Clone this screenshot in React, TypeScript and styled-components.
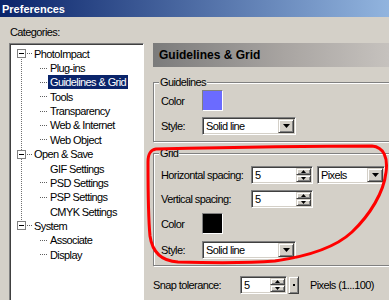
import { createGlobalStyle, styled } from 'styled-components'

const GlobalStyle = createGlobalStyle`
  html, body { margin: 0; padding: 0; background: #d4d0c8; overflow: hidden; }
  body {
    font-family: "Liberation Sans", Arial, sans-serif;
    font-size: 11px;
    letter-spacing: -0.6px;
    color: #000;
  }
`

const Window = styled.div`
  position: relative;
  width: 389px;
  height: 300px;
  overflow: hidden;
  background: #d4d0c8;
`

const TitleBar = styled.div`
  height: 17px;
  display: flex;
  align-items: center;
  padding-left: 2px;
  background: linear-gradient(to right, #0a246a, #a6caf0 115%);
  color: #fff;
  font-weight: 700;
  font-size: 11px;
  letter-spacing: 0;
`

const Body = styled.div`
  display: grid;
  grid-template-columns: 135px 1fr;
  grid-template-rows: auto 1fr;
  column-gap: 9px;
  padding: 9px 0 0 9px;
`

const CatLabel = styled.div`
  grid-column: 1 / -1;
  height: 13px;
  line-height: 13px;
  margin: 0 0 4px 1px;
`

// ---- tree

const Tree = styled.div`
  height: 270px;
  box-sizing: border-box;
  background: #fff;
  border: 1px solid;
  border-color: #808080 #fff #fff #808080;
  box-shadow: inset 1px 1px 0 #404040;
  padding-top: 2.5px;
`

const Branch = styled.div<{ $line: boolean }>`
  position: relative;
  &::before {
    content: '';
    display: ${p => p.$line ? 'block' : 'none'};
    position: absolute;
    left: 11px;
    top: 12px;
    bottom: -3px;
    border-left: 1px dotted #707070;
  }
`

const Row = styled.div<{ $child?: boolean }>`
  height: 14.36px;
  display: flex;
  align-items: center;
  padding-left: ${p => p.$child ? 30 : 7}px;
  white-space: nowrap;
`

const ExpandBox = styled.span`
  width: 9px;
  height: 9px;
  box-sizing: border-box;
  flex-shrink: 0;
  border: 1px solid #808080;
  background: #fff;
  display: flex;
  align-items: center;
  justify-content: center;
  &::after { content: ''; width: 5px; height: 1px; background: #000; }
`

const Dots = styled.span<{ $kind: 'root' | 'child'; $hidden?: boolean }>`
  flex-shrink: 0;
  width: ${p => p.$kind === 'root' ? 5 : 7}px;
  margin: ${p => p.$kind === 'root' ? '0 0 0 1px' : '0 1px 0 0'};
  border-top: 1px dotted #606060;
  visibility: ${p => p.$hidden ? 'hidden' : 'visible'};
`

const NodeLabel = styled.span<{ $selected?: boolean }>`
  padding: 0 2px;
  line-height: 14px;
  background: ${p => p.$selected ? '#0a246a' : 'transparent'};
  color: ${p => p.$selected ? '#fff' : '#000'};
`

// ---- right panel

const Panel = styled.div`
  display: flex;
  flex-direction: column;
  min-width: 0;
`

const Header = styled.div`
  height: 24px;
  display: flex;
  align-items: center;
  padding-left: 6px;
  background: linear-gradient(to right, #7b7b7b, #a8a4a1 55%, #c6c2be);
  font-weight: 700;
  font-size: 12px;
  letter-spacing: 0;
`

const GroupBox = styled.fieldset<{ $top: number }>`
  margin: ${p => p.$top}px -20px 0 0;
  padding: 1px 0 6px 7px;
  border: 1px solid #808080;
  box-shadow: 1px 1px 0 #fff, inset 1px 1px 0 #fff;
  min-width: 0;
`

const Legend = styled.legend`
  padding: 0 1px;
  margin-left: -2px;
  line-height: 13px;
  background: #d4d0c8;
`

const Field = styled.div<{ $mt?: number }>`
  display: flex;
  align-items: center;
  margin-top: ${p => p.$mt ?? 0}px;
`

const FieldLabel = styled.span<{ $w: number }>`
  width: ${p => p.$w}px;
  flex-shrink: 0;
  white-space: nowrap;
`

const Swatch = styled.div<{ $color: string }>`
  width: 21px;
  height: 21px;
  box-sizing: border-box;
  border: 1px solid;
  border-color: #808080 #fff #fff #808080;
  background: ${p => p.$color};
`

const Sunken = styled.div<{ $w: number; $ml?: number }>`
  width: ${p => p.$w}px;
  height: 18px;
  margin-left: ${p => p.$ml ?? 0}px;
  box-sizing: border-box;
  flex-shrink: 0;
  display: flex;
  padding: 1px;
  border: 1px solid;
  border-color: #808080 #fff #fff #808080;
  box-shadow: inset 1px 1px 0 #404040, inset -1px -1px 0 #d4d0c8;
  background: #fff;
`

const FieldText = styled.span`
  flex: 1;
  padding-left: 2px;
  line-height: 14px;
  white-space: nowrap;
  overflow: hidden;
`

const Raised = styled.div`
  box-sizing: border-box;
  background: #d4d0c8;
  border: 1px solid;
  border-color: #d4d0c8 #404040 #404040 #d4d0c8;
  box-shadow: inset 1px 1px 0 #fff, inset -1px -1px 0 #808080;
  display: flex;
  align-items: center;
  justify-content: center;
`

const DropButton = styled(Raised)`
  width: 16px;
  align-self: stretch;
`

const SpinColumn = styled.div`
  width: 15px;
  display: flex;
  flex-direction: column;
`

const SpinButton = styled(Raised)`
  flex: 1;
`

const ExtraButton = styled(Raised)`
  width: 11px;
  height: 18px;
  margin-left: 1px;
  flex-shrink: 0;
  &::after { content: ''; width: 2px; height: 2px; background: #000; }
`

const Note = styled.span<{ $ml: number }>`
  margin-left: ${p => p.$ml}px;
  white-space: nowrap;
`

const Scribble = styled.svg`
  position: absolute;
  left: 0;
  top: 0;
  pointer-events: none;
`

function Arrow({ up, small }: { up?: boolean; small?: boolean }) {
  const w = small ? 5 : 7
  const h = small ? 3 : 4
  const pts = up ? `0,${h} ${w},${h} ${w / 2},0` : `0,0 ${w},0 ${w / 2},${h}`
  return (
    <svg width={w} height={h} viewBox={`0 0 ${w} ${h}`}>
      <polygon points={pts} fill="#000" />
    </svg>
  )
}

function Combo({ value, w, ml }: { value: string; w: number; ml?: number }) {
  return (
    <Sunken $w={w} $ml={ml}>
      <FieldText>{value}</FieldText>
      <DropButton><Arrow /></DropButton>
    </Sunken>
  )
}

function Spin({ value, w }: { value: string; w: number }) {
  return (
    <Sunken $w={w}>
      <FieldText>{value}</FieldText>
      <SpinColumn>
        <SpinButton><Arrow up small /></SpinButton>
        <SpinButton><Arrow small /></SpinButton>
      </SpinColumn>
    </Sunken>
  )
}

type Node = { label: string; dots?: boolean; selected?: boolean }
const tree: { label: string; children: Node[] }[] = [
  {
    label: 'PhotoImpact',
    children: [
      { label: 'Plug-ins', dots: true },
      { label: 'Guidelines & Grid', dots: true, selected: true },
      { label: 'Tools', dots: true },
      { label: 'Transparency', dots: true },
      { label: 'Web & Internet', dots: true },
      { label: 'Web Object', dots: true },
    ],
  },
  {
    label: 'Open & Save',
    children: [
      { label: 'GIF Settings' },
      { label: 'PSD Settings', dots: true },
      { label: 'PSP Settings', dots: true },
      { label: 'CMYK Settings' },
    ],
  },
  {
    label: 'System',
    children: [
      { label: 'Associate', dots: true },
      { label: 'Display', dots: true },
    ],
  },
]

export default function App() {
  return (
    <Window>
      <GlobalStyle />
      <TitleBar>Preferences</TitleBar>
      <Body>
        <CatLabel>Categories:</CatLabel>
        <Tree>
          {tree.map((b, i) => (
            <Branch key={b.label} $line={i < tree.length - 1}>
              <Row>
                <ExpandBox />
                <Dots $kind="root" />
                <NodeLabel>{b.label}</NodeLabel>
              </Row>
              {b.children.map(c => (
                <Row key={c.label} $child>
                  <Dots $kind="child" $hidden={!c.dots} />
                  <NodeLabel $selected={c.selected}>{c.label}</NodeLabel>
                </Row>
              ))}
            </Branch>
          ))}
        </Tree>

        <Panel>
          <Header>Guidelines &amp; Grid</Header>

          <GroupBox $top={9}>
            <Legend>Guidelines</Legend>
            <Field>
              <FieldLabel $w={41}>Color</FieldLabel>
              <Swatch $color="#6b6bff" />
            </Field>
            <Field $mt={6}>
              <FieldLabel $w={41}>Style:</FieldLabel>
              <Combo value="Solid line" w={94} />
            </Field>
          </GroupBox>

          <GroupBox $top={5}>
            <Legend>Grid</Legend>
            <Field $mt={5}>
              <FieldLabel $w={90}>Horizontal spacing:</FieldLabel>
              <Spin value="5" w={62} />
              <Combo value="Pixels" w={68} ml={4} />
            </Field>
            <Field $mt={6}>
              <FieldLabel $w={90}>Vertical spacing:</FieldLabel>
              <Spin value="5" w={62} />
            </Field>
            <Field $mt={5}>
              <FieldLabel $w={41}>Color</FieldLabel>
              <Swatch $color="#000" />
            </Field>
            <Field $mt={7}>
              <FieldLabel $w={41}>Style:</FieldLabel>
              <Combo value="Solid line" w={94} />
            </Field>
          </GroupBox>

          <Field $mt={10}>
            <FieldLabel $w={87}>Snap tolerance:</FieldLabel>
            <Spin value="5" w={47} />
            <ExtraButton />
            <Note $ml={11}>Pixels (1...100)</Note>
          </Field>
        </Panel>
      </Body>

      <Scribble width="389" height="300" viewBox="0 0 389 300">
        <path
          d="M156,149 C200,148 300,146 372,146 C384,147 388,158 386,172 C384,192 370,215 352,232
             C336,247 310,256 275,261 C250,263 215,263 178,262 C160,261 152,250 150,236
             C148,215 148,180 148,162 C148,154 150,150 156,149 Z"
          fill="none"
          stroke="#ff0000"
          strokeWidth={3}
          strokeLinejoin="round"
        />
      </Scribble>
    </Window>
  )
}
